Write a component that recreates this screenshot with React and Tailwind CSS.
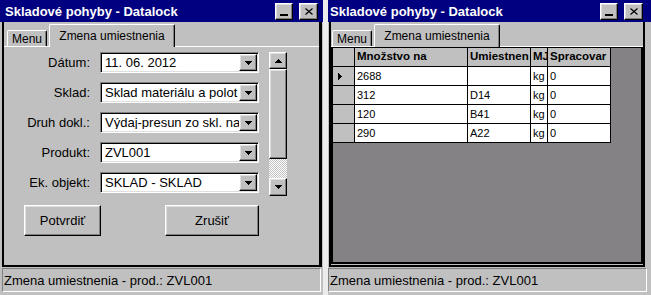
import React from "react";

const FONT = "font-['Liberation_Sans',Arial,sans-serif]";
const RAISED =
  "border border-t-white border-l-white border-r-black border-b-black shadow-[inset_-1px_-1px_0_#808080,inset_1px_1px_0_#dfdfdf]";
const SUNKEN =
  "border border-t-[#808080] border-l-[#808080] border-r-white border-b-white shadow-[inset_1px_1px_0_#000,inset_-1px_-1px_0_#dfdfdf]";

const DownArrow = () => (
  <svg width="7" height="4" viewBox="0 0 7 4" shapeRendering="crispEdges">
    <path d="M0 0h7v1h-1v1h-1v1h-1v1h-1v-1h-1v-1h-1v-1h-1z" fill="#000" />
  </svg>
);

const UpArrow = () => (
  <svg width="7" height="4" viewBox="0 0 7 4" shapeRendering="crispEdges">
    <path d="M0 4h7v-1h-1v-1h-1v-1h-1v-1h-1v1h-1v1h-1v1h-1z" fill="#000" />
  </svg>
);

const RowPointer = () => (
  <svg width="4" height="7" viewBox="0 0 4 7" shapeRendering="crispEdges">
    <path d="M0 0v7h1v-1h1v-1h1v-1h1v-1h-1v-1h-1v-1h-1v-1z" fill="#000" />
  </svg>
);

function TitleBar({ className }) {
  return (
    <div
      className={`flex h-[22px] items-center justify-between bg-[#000080] text-[13px] font-bold text-white ${className}`}
    >
      <span className="leading-none">Skladové pohyby - Datalock</span>
      <div className="flex gap-[6px]">
        <div className={`flex h-[17px] w-[18px] items-end justify-center pb-[3px] bg-[#c0c0c0] ${RAISED}`}>
          <div className="h-[2px] w-[8px] bg-black" />
        </div>
        <div className={`flex h-[17px] w-[19px] items-center justify-center bg-[#c0c0c0] ${RAISED}`}>
          <svg width="8" height="7" viewBox="0 0 8 7">
            <path d="M0.5 0.5L7.5 6.5M7.5 0.5L0.5 6.5" stroke="#000" strokeWidth="1.2" />
          </svg>
        </div>
      </div>
    </div>
  );
}

function Tabs({ className }) {
  return (
    <div className={`flex h-[25px] items-end gap-[2px] border-b border-white ${className}`}>
      <div className="flex h-[16px] w-[40px] items-center justify-center rounded-t-[2px] border-l border-t border-white border-r border-r-black text-[12px] leading-none shadow-[inset_-1px_0_0_#808080]">
        Menu
      </div>
      <div className="-mb-px flex h-[23px] w-[126px] items-center justify-center rounded-t-[2px] border-l border-t border-white border-r border-r-black bg-[#c0c0c0] text-[12px] leading-none shadow-[inset_-1px_0_0_#808080]">
        Zmena umiestnenia
      </div>
    </div>
  );
}

function StatusBar({ className }) {
  return (
    <div
      className={`mt-[1px] flex h-[24px] w-[319px] items-center border border-t-[#808080] border-l-[#808080] border-r-white border-b-white pl-[1px] text-[13px] leading-none ${className}`}
    >
      Zmena umiestnenia - prod.: ZVL001
    </div>
  );
}

function Combo({ value }) {
  return (
    <div className={`flex h-[21px] w-[159px] items-center bg-white pl-[2px] pr-[1px] ${SUNKEN}`}>
      <span className="flex-1 overflow-hidden whitespace-nowrap pl-[2px] text-[13px] leading-none">
        {value}
      </span>
      <div className={`flex h-[17px] w-[18px] shrink-0 items-center justify-center bg-[#c0c0c0] ${RAISED}`}>
        <DownArrow />
      </div>
    </div>
  );
}

const fields = [
  ["Dátum:", "11. 06. 2012"],
  ["Sklad:", "Sklad materiálu a polot"],
  ["Druh dokl.:", "Výdaj-presun zo skl. na"],
  ["Produkt:", "ZVL001"],
  ["Ek. objekt:", "SKLAD - SKLAD"],
];

function LeftWindow() {
  return (
    <div className="flex h-[295px] w-[323px] flex-col bg-[#c0c0c0]">
      <TitleBar className="pl-[5px] pr-[5px]" />
      <div className="ml-[2px] mr-[1px] flex h-[245px] flex-col border-b-2 border-l-2 border-r-[3px] border-black">
        <Tabs className="pl-[3px]" />
        <div className="flex flex-1 pt-[5px]">
          <div className="flex flex-col">
            <div className="flex flex-col gap-[9px]">
              {fields.map(([label, value]) => (
                <div key={label} className="flex h-[21px] items-center">
                  <span className="w-[86px] text-right text-[13px] leading-none">{label}</span>
                  <div className="ml-[10px]">
                    <Combo value={value} />
                  </div>
                </div>
              ))}
            </div>
            <div className="mt-[12px] flex">
              <div className={`ml-[20px] flex h-[31px] w-[77px] items-center justify-center text-[13px] ${RAISED}`}>
                Potvrdiť
              </div>
              <div className={`ml-[64px] flex h-[31px] w-[94px] items-center justify-center text-[13px] ${RAISED}`}>
                Zrušiť
              </div>
            </div>
          </div>
          <div className="ml-[10px] flex h-[144px] w-[18px] flex-col">
            <div className={`flex h-[17px] items-center justify-center ${RAISED}`}>
              <UpArrow />
            </div>
            <div className={`h-[90px] ${RAISED}`} />
            <div className="h-[19px] bg-[image:repeating-conic-gradient(#ffffff_0_25%,#c0c0c0_0_50%)] bg-[length:2px_2px]" />
            <div className={`flex h-[18px] items-center justify-center ${RAISED}`}>
              <DownArrow />
            </div>
          </div>
        </div>
      </div>
      <StatusBar className="ml-[2px]" />
    </div>
  );
}

const cols = [
  { title: "Množstvo na", w: "w-[113px]" },
  { title: "Umiestnen", w: "w-[63px]" },
  { title: "MJ", w: "w-[17px]" },
  { title: "Spracovar", w: "w-[63px]" },
];

const rows = [
  ["2688", "", "kg", "0"],
  ["312", "D14", "kg", "0"],
  ["120", "B41", "kg", "0"],
  ["290", "A22", "kg", "0"],
];

function RightWindow() {
  return (
    <div className="flex h-[295px] w-[323px] flex-col bg-[#c0c0c0]">
      <TitleBar className="pl-[2px] pr-[8px]" />
      <div className="ml-[1px] mr-[6px] flex h-[245px] flex-col border-b-2 border-l-2 border-r-2 border-black">
        <Tabs className="pl-[1px]" />
        <div className="flex h-[217px] flex-col border-2 border-t border-black bg-[#848284]">
          <div className="flex h-[19px]">
            <div className="w-[22px] border-b border-r border-black bg-[#c0c0c0]" />
            {cols.map((c) => (
              <div
                key={c.title}
                className={`${c.w} flex items-center overflow-hidden whitespace-nowrap border-b border-r border-black bg-[#c0c0c0] pl-[2px] text-[11.5px] font-bold leading-none`}
              >
                {c.title}
              </div>
            ))}
          </div>
          {rows.map((r, i) => (
            <div key={i} className="flex h-[19px]">
              <div className="flex w-[22px] items-center border-b border-r border-black bg-[#c0c0c0] pl-[5px]">
                {i === 0 && <RowPointer />}
              </div>
              {r.map((v, j) => (
                <div
                  key={j}
                  className={`${cols[j].w} flex items-center overflow-hidden whitespace-nowrap border-b border-r border-black bg-white pl-[2px] text-[11px] leading-none`}
                >
                  {v}
                </div>
              ))}
            </div>
          ))}
        </div>
      </div>
      <StatusBar className="ml-0" />
    </div>
  );
}

export default function App() {
  return (
    <div className={`flex h-[295px] w-[651px] gap-[5px] overflow-hidden bg-[#ececec] text-black ${FONT}`}>
      <LeftWindow />
      <RightWindow />
    </div>
  );
}
